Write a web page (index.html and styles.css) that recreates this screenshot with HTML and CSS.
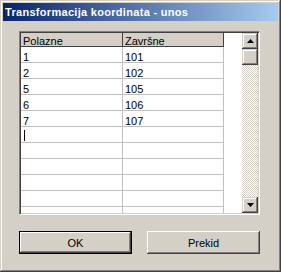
FILE: index.html
```html
<!DOCTYPE html>
<html>
<head>
<meta charset="utf-8">
<link rel="stylesheet" href="styles.css">
</head>
<body>
<div class="window">
  <div class="titlebar"><span class="title">Transformacija koordinata - unos</span></div>
  <div class="client">
    <div class="grid">
      <div class="table">
        <div class="row head"><div class="cell c1">Polazne</div><div class="cell c2">Završne</div></div>
        <div class="row"><div class="cell c1">1</div><div class="cell c2">101</div></div>
        <div class="row"><div class="cell c1">2</div><div class="cell c2">102</div></div>
        <div class="row"><div class="cell c1">5</div><div class="cell c2">105</div></div>
        <div class="row"><div class="cell c1">6</div><div class="cell c2">106</div></div>
        <div class="row"><div class="cell c1">7</div><div class="cell c2">107</div></div>
        <div class="row"><div class="cell c1"><span class="caret"></span></div><div class="cell c2"></div></div>
        <div class="row"><div class="cell c1"></div><div class="cell c2"></div></div>
        <div class="row"><div class="cell c1"></div><div class="cell c2"></div></div>
        <div class="row"><div class="cell c1"></div><div class="cell c2"></div></div>
        <div class="row"><div class="cell c1"></div><div class="cell c2"></div></div>
        <div class="row"><div class="cell c1"></div><div class="cell c2"></div></div>
        <div class="row"><div class="cell c1"></div><div class="cell c2"></div></div>
      </div>
      <div class="scrollbar">
        <div class="sbtn"><svg width="7" height="4" viewBox="0 0 7 4"><polygon points="3.5,0 7,4 0,4" fill="#000"/></svg></div>
        <div class="sbtn thumb"></div>
        <div class="track"></div>
        <div class="sbtn"><svg width="7" height="4" viewBox="0 0 7 4"><polygon points="0,0 7,0 3.5,4" fill="#000"/></svg></div>
      </div>
    </div>
    <div class="buttons">
      <button class="btn default">OK</button>
      <button class="btn">Prekid</button>
    </div>
  </div>
</div>
</body>
</html>
```
FILE: styles.css
```css
html, body {
  margin: 0;
  padding: 0;
}
body {
  width: 281px;
  height: 272px;
  overflow: hidden;
  background: #D4D0C8;
  font-family: "Liberation Sans", Arial, sans-serif;
  font-size: 11px;
  color: #000;
}
.window {
  box-sizing: border-box;
  width: 281px;
  height: 272px;
  padding: 3px;
  background: #D4D0C8;
  box-shadow: inset -1px -1px #404040, inset 1px 1px #D4D0C8, inset -2px -2px #808080, inset 2px 2px #fff;
  display: flex;
  flex-direction: column;
}
.titlebar {
  height: 18px;
  background: linear-gradient(to right, #0A246A, #A6CAF0);
  color: #fff;
  font-weight: bold;
  display: flex;
  align-items: center;
  padding-left: 2px;
}
.title {
  letter-spacing: 0.3px;
}
.client {
  padding: 10px 0 0 16px;
}
.grid {
  box-sizing: border-box;
  width: 241px;
  height: 184px;
  border: 1px solid;
  border-color: #808080 #fff #fff #808080;
  box-shadow: inset 1px 1px #404040, inset -1px -1px #D4D0C8;
  padding: 1px;
  background: #fff;
  display: flex;
}
.table {
  width: 221px;
  height: 180px;
  overflow: hidden;
}
.row {
  display: flex;
  height: 16px;
}
.cell {
  box-sizing: border-box;
  height: 16px;
  padding: 4px 0 0 2px;
  line-height: 12px;
  border-right: 1px solid #C0C0C0;
  border-bottom: 1px solid #C0C0C0;
  white-space: nowrap;
  overflow: hidden;
}
.c1 { width: 102px; }
.c2 { width: 101px; }
.head {
  height: 14px;
}
.head .cell {
  height: 14px;
  padding-top: 2px;
  background: #D4D0C8;
  border-right-color: #404040;
  border-bottom-color: #404040;
}
.caret {
  display: block;
  width: 1px;
  height: 11px;
  margin: -1px 0 0 1px;
  background: #000;
}
.scrollbar {
  width: 16px;
  display: flex;
  flex-direction: column;
}
.sbtn {
  box-sizing: border-box;
  height: 16px;
  background: #D4D0C8;
  box-shadow: inset -1px -1px #404040, inset 1px 1px #D4D0C8, inset -2px -2px #808080, inset 2px 2px #fff;
  display: flex;
  align-items: center;
  justify-content: center;
}
.sbtn svg {
  display: block;
}
.track {
  flex: 1;
  background-image: conic-gradient(#D4D0C8 25%, #fff 0 50%, #D4D0C8 0 75%, #fff 0);
  background-size: 2px 2px;
}
.buttons {
  display: flex;
  gap: 15px;
  margin-top: 16px;
}
.btn {
  box-sizing: border-box;
  width: 113px;
  height: 23px;
  padding: 0;
  border: 0;
  background: #D4D0C8;
  font-family: "Liberation Sans", Arial, sans-serif;
  font-size: 11px;
  color: #000;
  box-shadow: inset -1px -1px #404040, inset 1px 1px #fff, inset -2px -2px #808080, inset 2px 2px #D4D0C8;
}
.btn.default {
  border: 1px solid #000;
}
```
